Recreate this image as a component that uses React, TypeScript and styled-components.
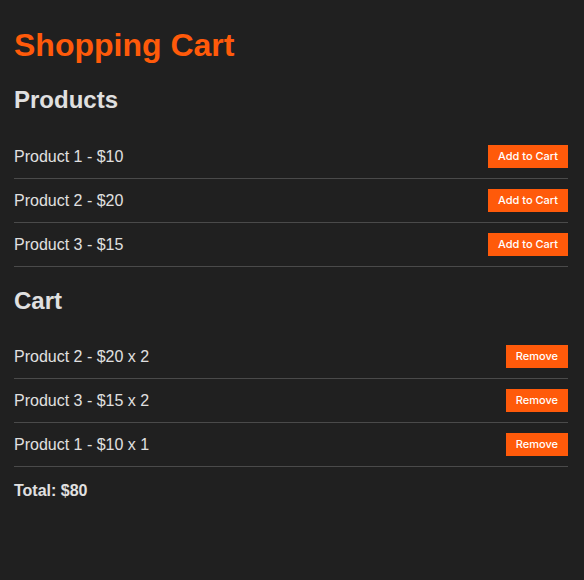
import React, { useState } from "react";
import styled, { createGlobalStyle } from "styled-components";

const Global = createGlobalStyle`
  html, body { margin: 0; padding: 0; background: #202020; }
  body { font-family: "Liberation Sans", Arial, sans-serif; color: #e0e0e0; }
`;

const Page = styled.div`
  padding: 27px 16px 40px 14px;
  min-height: 580px;
  box-sizing: border-box;
  background: #202020;
`;

const Title = styled.h1`
  margin: 0 0 22px;
  font-size: 32px;
  font-weight: 700;
  color: #ff5a0a;
`;

const Section = styled.h2<{ $top?: number; $bottom?: number }>`
  margin: ${(p) => p.$top ?? 0}px 0 ${(p) => p.$bottom ?? 21}px;
  font-size: 24px;
  font-weight: 700;
  color: #e0e0e0;
`;

const List = styled.ul`
  list-style: none;
  margin: 0;
  padding: 0;
`;

const Row = styled.li`
  display: flex;
  align-items: center;
  justify-content: space-between;
  padding: 10px 0;
  border-bottom: 1px solid #4a4a4a;
  font-size: 16px;
  color: #e0e0e0;
`;

const Button = styled.button`
  font-family: Inter, "Liberation Sans", sans-serif;
  font-size: 11px;
  font-weight: 500;
  color: #ffffff;
  background: #ff5a0a;
  border: none;
  border-radius: 0;
  padding: 5px 10px;
  line-height: 13px;
  cursor: pointer;
`;

const Total = styled.div`
  margin-top: 15px;
  font-size: 16px;
  font-weight: 700;
  color: #e0e0e0;
`;

type Product = { id: number; name: string; price: number };

const products: Product[] = [
  { id: 1, name: "Product 1", price: 10 },
  { id: 2, name: "Product 2", price: 20 },
  { id: 3, name: "Product 3", price: 15 },
];

export default function App() {
  const [cart, setCart] = useState<{ id: number; qty: number }[]>([
    { id: 2, qty: 2 },
    { id: 3, qty: 2 },
    { id: 1, qty: 1 },
  ]);

  const add = (id: number) =>
    setCart((c) =>
      c.find((i) => i.id === id)
        ? c.map((i) => (i.id === id ? { ...i, qty: i.qty + 1 } : i))
        : [...c, { id, qty: 1 }]
    );
  const remove = (id: number) => setCart((c) => c.filter((i) => i.id !== id));

  const total = cart.reduce(
    (s, i) => s + (products.find((p) => p.id === i.id)?.price ?? 0) * i.qty,
    0
  );

  return (
    <>
      <Global />
      <Page>
        <Title>Shopping Cart</Title>
        <Section>Products</Section>
        <List>
          {products.map((p) => (
            <Row key={p.id}>
              <span>
                {p.name} - ${p.price}
              </span>
              <Button onClick={() => add(p.id)}>Add to Cart</Button>
            </Row>
          ))}
        </List>
        <Section $top={20} $bottom={20}>Cart</Section>
        <List>
          {cart.map((i) => {
            const p = products.find((x) => x.id === i.id)!;
            return (
              <Row key={i.id}>
                <span>
                  {p.name} - ${p.price} x {i.qty}
                </span>
                <Button onClick={() => remove(i.id)}>Remove</Button>
              </Row>
            );
          })}
        </List>
        <Total>Total: ${total}</Total>
      </Page>
    </>
  );
}
